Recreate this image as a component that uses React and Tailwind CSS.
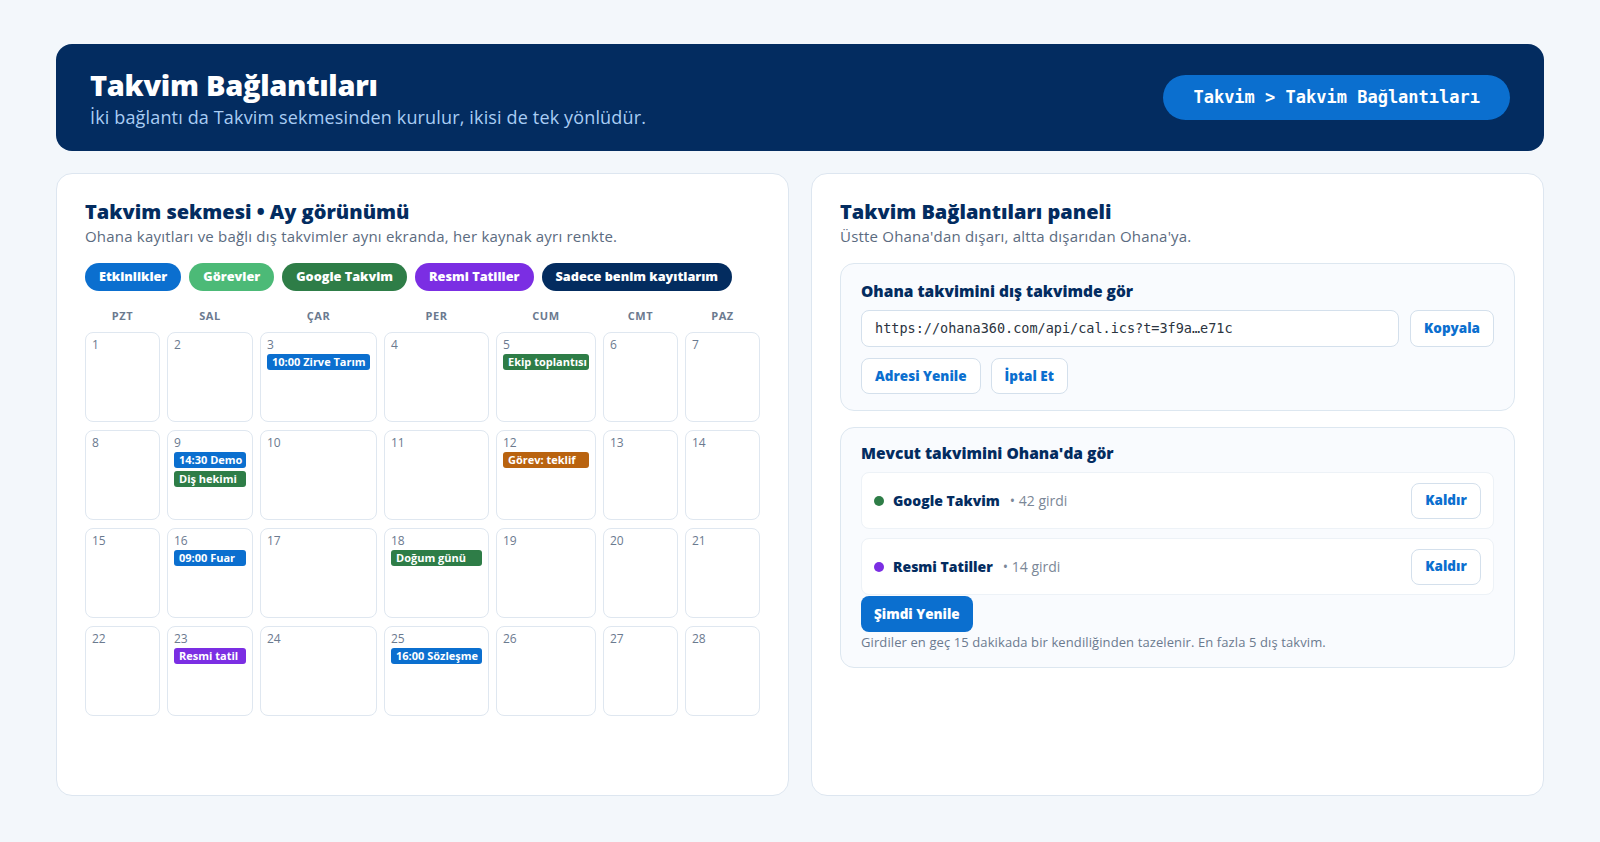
import React from 'react';

const chips = [
    { label: 'Etkinlikler', cls: 'bg-[#0b6fcf]' },
    { label: 'Görevler', cls: 'bg-[#4cba77]' },
    { label: 'Google Takvim', cls: 'bg-[#2e7d47]' },
    { label: 'Resmi Tatiller', cls: 'bg-[#7b2ee3]' },
    { label: 'Sadece benim kayıtlarım', cls: 'bg-[#032c5f]' },
];

const dayNames = ['PZT', 'SAL', 'ÇAR', 'PER', 'CUM', 'CMT', 'PAZ'];

const eventColors = {
    blue: 'bg-[#0b6fcf]',
    green: 'bg-[#2e7d47]',
    orange: 'bg-[#b9630f]',
    purple: 'bg-[#7b2ee3]',
};

// events keyed by day of month
const events = {
    3: [{ text: '10:00 Zirve Tarım', color: 'blue' }],
    5: [{ text: 'Ekip toplantısı', color: 'green' }],
    9: [
        { text: '14:30 Demo', color: 'blue' },
        { text: 'Diş hekimi', color: 'green' },
    ],
    12: [{ text: 'Görev: teklif', color: 'orange' }],
    16: [{ text: '09:00 Fuar', color: 'blue' }],
    18: [{ text: 'Doğum günü', color: 'green' }],
    23: [{ text: 'Resmi tatil', color: 'purple' }],
    25: [{ text: '16:00 Sözleşme', color: 'blue' }],
};

const days = Array.from({ length: 28 }, (_, i) => i + 1);

const monoFont = "font-['DejaVu_Sans_Mono','Liberation_Mono',monospace]";

const outlineBtn =
    'h-[36px] px-[13px] rounded-lg border border-[#d4e0ec] bg-white text-[13.5px] font-extrabold text-[#0b6fcf]';

const sources = [
    { name: 'Google Takvim', count: '42 girdi', dot: 'bg-[#2e7d47]' },
    { name: 'Resmi Tatiller', count: '14 girdi', dot: 'bg-[#7b2ee3]' },
];

const DayCell = ({ day }) => (
    <div className="h-[90px] overflow-hidden rounded-lg border border-[#dfe7f0] bg-white px-[6px] pt-1">
        <div className="text-[12px] leading-4 text-[#6b7a8f]">{day}</div>
        <div className="mt-px flex flex-col gap-[3px]">
            {(events[day] || []).map(ev => (
                <div
                    key={ev.text}
                    className={`${eventColors[ev.color]} overflow-hidden rounded-[3px] px-[5px] text-[11px] font-bold leading-4 text-white whitespace-nowrap`}
                >
                    {ev.text}
                </div>
            ))}
        </div>
    </div>
);

const App = () => {
    return (
        <div className="min-h-screen bg-[#f3f7fb] px-14 pt-[44px] pb-[46px] font-['Open_Sans','Liberation_Sans',sans-serif]">
            {/* page header */}
            <div className="flex h-[107px] items-center justify-between rounded-2xl bg-[#032c60] px-[34px]">
                <div>
                    <h1 className="text-[29px] font-extrabold leading-9 tracking-[-0.3px] text-white">
                        Takvim Bağlantıları
                    </h1>
                    <p className="mt-[2px] text-[18px] leading-6 tracking-[0.15px] text-[#a9cdf4]">
                        İki bağlantı da Takvim sekmesinden kurulur, ikisi de tek yönlüdür.
                    </p>
                </div>
                <div className={`flex h-[45px] items-center rounded-full bg-[#0b6fcf] px-[30px] text-[17px] font-bold text-white ${monoFont}`}>
                    Takvim &gt; Takvim Bağlantıları
                </div>
            </div>

            <div className="mt-[22px] grid grid-cols-2 gap-[22px]">
                {/* month view */}
                <div className="h-[623px] rounded-2xl border border-[#dde6f0] bg-white px-7 pt-6">
                    <h2 className="text-[20px] font-extrabold leading-7 text-[#032c60]">
                        Takvim sekmesi • Ay görünümü
                    </h2>
                    <p className="text-[15px] leading-5 tracking-[0.2px] text-[#5b6b80]">
                        Ohana kayıtları ve bağlı dış takvimler aynı ekranda, her kaynak ayrı renkte.
                    </p>

                    <div className="mt-[17px] flex gap-2">
                        {chips.map(c => (
                            <span
                                key={c.label}
                                className={`${c.cls} flex h-[28px] items-center rounded-full px-[14px] text-[12.7px] font-extrabold text-white`}
                            >
                                {c.label}
                            </span>
                        ))}
                    </div>

                    <div className="mt-[17px] grid grid-cols-[75px_86px_117px_105px_100px_75px_75px] gap-x-[7px] gap-y-2">
                        {dayNames.map(d => (
                            <div key={d} className="text-center text-[11px] font-bold leading-4 tracking-wider text-[#6b7a8f]">
                                {d}
                            </div>
                        ))}
                        {days.map(d => (
                            <DayCell key={d} day={d} />
                        ))}
                    </div>
                </div>

                {/* connections panel */}
                <div className="h-[623px] rounded-2xl border border-[#dde6f0] bg-white px-7 pt-6">
                    <h2 className="text-[20px] font-extrabold leading-7 text-[#032c60]">
                        Takvim Bağlantıları paneli
                    </h2>
                    <p className="text-[15px] leading-5 tracking-[0.2px] text-[#5b6b80]">
                        Üstte Ohana'dan dışarı, altta dışarıdan Ohana'ya.
                    </p>

                    {/* outgoing feed */}
                    <div className="mt-[17px] rounded-[14px] border border-[#dde7f0] bg-[#f9fbfe] px-5 pt-4 pb-4">
                        <h3 className="text-[15.5px] font-extrabold leading-[22px] text-[#032c60]">
                            Ohana takvimini dış takvimde gör
                        </h3>
                        <div className="mt-2 flex gap-[11px]">
                            <div className={`flex h-[37px] flex-1 items-center rounded-lg border border-[#d4e0ec] bg-white px-[13px] text-[13.5px] text-[#2b3440] ${monoFont}`}>
                                https://ohana360.com/api/cal.ics?t=3f9a…e71c
                            </div>
                            <button className={`${outlineBtn} h-[37px] w-[84px] px-0`}>Kopyala</button>
                        </div>
                        <div className="mt-[11px] flex gap-[10px]">
                            <button className={outlineBtn}>Adresi Yenile</button>
                            <button className={outlineBtn}>İptal Et</button>
                        </div>
                    </div>

                    {/* incoming calendars */}
                    <div className="mt-4 rounded-[14px] border border-[#dde7f0] bg-[#f9fbfe] px-5 pt-[14px] pb-4">
                        <h3 className="text-[15.5px] font-extrabold leading-[22px] text-[#032c60]">
                            Mevcut takvimini Ohana'da gör
                        </h3>
                        <div className="mt-2 flex flex-col gap-[9px]">
                            {sources.map(s => (
                                <div
                                    key={s.name}
                                    className="flex h-[57px] items-center rounded-lg border border-[#edf2f7] bg-white pl-3 pr-3"
                                >
                                    <span className={`${s.dot} h-[10px] w-[10px] rounded-full`} />
                                    <span className="ml-[9px] text-[14px] font-extrabold text-[#032c60]">
                                        {s.name}
                                    </span>
                                    <span className="ml-[10px] text-[14px] text-[#7b8797]">• {s.count}</span>
                                    <button className={`${outlineBtn} ml-auto w-[70px] px-0`}>Kaldır</button>
                                </div>
                            ))}
                        </div>
                        <button className="mt-px h-[36px] rounded-lg bg-[#0b6fcf] px-[13px] text-[13.5px] font-extrabold text-white">
                            Şimdi Yenile
                        </button>
                        <p className="mt-px text-[13px] leading-[18px] tracking-[0.1px] text-[#6b7a8f]">
                            Girdiler en geç 15 dakikada bir kendiliğinden tazelenir. En fazla 5 dış takvim.
                        </p>
                    </div>
                </div>
            </div>
        </div>
    );
};

export default App;
